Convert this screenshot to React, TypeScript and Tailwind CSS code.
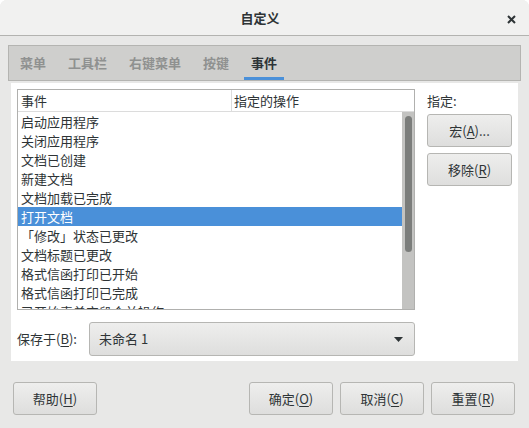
import React from "react";

const FONT = { fontFamily: '"Noto Sans CJK SC", "Noto Sans", sans-serif' };

const tabs = ["菜单", "工具栏", "右键菜单", "按键", "事件"];

const events = [
	"启动应用程序",
	"关闭应用程序",
	"文档已创建",
	"新建文档",
	"文档加载已完成",
	"打开文档",
	"「修改」状态已更改",
	"文档标题已更改",
	"格式信函打印已开始",
	"格式信函打印已完成",
	"已开始表单字段合并操作",
];

const Btn = ({
	label,
	mn,
	tail = "",
	className = "",
}: {
	label: string;
	mn: string;
	tail?: string;
	className?: string;
}) => (
	<button
		className={`h-[33px] w-[84px] rounded-[3px] border border-[#b6b6b3] bg-gradient-to-b from-[#eeeeed] to-[#dededd] text-[13px] text-[#2e3436] flex items-center justify-center ${className}`}
	>
		<span>
			{label}(<span className="underline underline-offset-2">{mn}</span>){tail}
		</span>
	</button>
);

const App = () => {
	return (
		<div
			className="w-[529px] h-[428px] bg-[#e8e8e7] rounded-t-[7px] overflow-hidden flex flex-col text-[#2e3436]"
			style={FONT}
		>
			{/* title bar */}
			<div className="h-[36px] shrink-0 bg-[#f1f1f0] border-b border-[#b3b3b0] flex items-center relative">
				<div className="flex-1 text-center text-[13px] font-bold pr-[9px]">自定义</div>
				<svg
					className="absolute left-[507px] top-[15px]"
					width="9"
					height="9"
					viewBox="0 0 9 9"
				>
					<path d="M1 1L8 8M8 1L1 8" stroke="#2e3436" strokeWidth="2" />
				</svg>
			</div>

			<div className="px-[8px] pt-[9px] flex flex-col">
				{/* tabs */}
				<div className="h-[36px] bg-[#cfcfcd] border border-[#b4b4b1] pl-[4px] flex gap-[8px]">
					{tabs.map((t) => {
						const active = t === "事件";
						return (
							<div
								key={t}
								className={`px-[7px] flex items-center text-[13px] font-bold border-b-[3px] ${
									active
										? "text-[#2e3436] border-[#4a90d9]"
										: "text-[#8f9190] border-transparent"
								}`}
							>
								<span className="mt-[3px]">{t}</span>
							</div>
						);
					})}
				</div>

				{/* page */}
				<div className="mt-[2px] mx-[3px] h-[278px] bg-white pt-[6px] px-[6px] pb-[5px] flex flex-col">
					<div className="flex gap-[12px]">
						{/* event list */}
						<div className="w-[398px] h-[221px] border border-[#b0b0ae] flex flex-col overflow-hidden">
							<div className="h-[22px] shrink-0 border-b border-[#dcdcdc] flex text-[13px]">
								<div className="w-[214px] border-r border-[#dcdcdc] pl-[3px] flex items-center">
									事件
								</div>
								<div className="pl-[2px] flex items-center">指定的操作</div>
							</div>
							<div className="flex flex-1 min-h-0">
								<div className="flex-1 overflow-hidden">
									{events.map((e) => {
										const sel = e === "打开文档";
										return (
											<div
												key={e}
												className={`h-[19px] pl-[3px] text-[13px] leading-[19px] whitespace-nowrap ${
													sel ? "bg-[#4a90d9] text-white" : ""
												}`}
											>
												{e}
											</div>
										);
									})}
								</div>
								<div className="w-[12px] shrink-0 bg-[#c3c3c1] pt-[4px] flex justify-center">
									<div className="w-[7px] h-[136px] rounded-full bg-[#7b7d7b]" />
								</div>
							</div>
						</div>

						{/* right column */}
						<div className="flex flex-col w-[85px]">
							<div className="h-[19px] mt-[2px] text-[13px] leading-[19px]">指定:</div>
							<Btn label="宏" mn="A" tail="..." className="mt-[4px] w-[85px]" />
							<Btn label="移除" mn="R" className="mt-[6px] w-[85px]" />
						</div>
					</div>

					<div className="mt-[12px] flex items-center">
						<div className="w-[72px] text-[13px]">
							保存于(<span className="underline underline-offset-2">B</span>):
						</div>
						<div className="w-[326px] h-[34px] rounded-[3px] border border-[#b6b6b3] bg-gradient-to-b from-[#eeeeed] to-[#dededd] flex items-center pl-[9px] pr-[11px] text-[13px]">
							<span className="flex-1">未命名 1</span>
							<svg width="9" height="5" viewBox="0 0 9 5">
								<path d="M0 0H9L4.5 5Z" fill="#2e3436" />
							</svg>
						</div>
					</div>
				</div>

				{/* bottom buttons */}
				<div className="mt-[21px] flex pl-[5px] pr-[6px]">
					<Btn label="帮助" mn="H" />
					<div className="flex-1" />
					<div className="flex gap-[7px]">
						<Btn label="确定" mn="O" />
						<Btn label="取消" mn="C" />
						<Btn label="重置" mn="R" />
					</div>
				</div>
			</div>
		</div>
	);
};

export default App;
